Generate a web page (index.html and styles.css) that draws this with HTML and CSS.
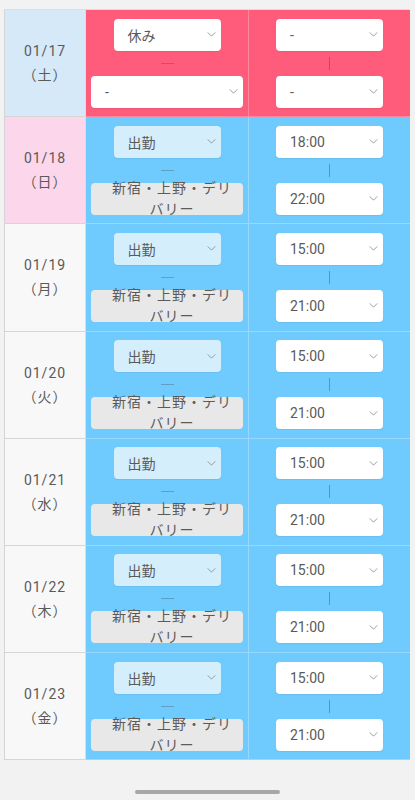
FILE: index.html
```html
<!DOCTYPE html>
<html lang="ja">
<head>
<meta charset="utf-8">
<title>シフト</title>
<link rel="stylesheet" href="styles.css">
</head>
<body>
<div class="sheet">
  <div class="date date-sat"><span>01/17</span><span>（土）</span></div>
  <div class="cell off">
    <div class="sel sel-short"><span>休み</span><svg class="chev" viewBox="0 0 10 6"><path d="M0.5 0.5 L5 5 L9.5 0.5"/></svg></div>
    <div class="dash"></div>
    <div class="sel sel-wide"><span>-</span><svg class="chev" viewBox="0 0 10 6"><path d="M0.5 0.5 L5 5 L9.5 0.5"/></svg></div>
  </div>
  <div class="cell off last">
    <div class="sel sel-short"><span>-</span><svg class="chev" viewBox="0 0 10 6"><path d="M0.5 0.5 L5 5 L9.5 0.5"/></svg></div>
    <div class="vbar"></div>
    <div class="sel sel-short"><span>-</span><svg class="chev" viewBox="0 0 10 6"><path d="M0.5 0.5 L5 5 L9.5 0.5"/></svg></div>
  </div>

  <div class="date date-sun"><span>01/18</span><span>（日）</span></div>
  <div class="cell on">
    <div class="sel sel-short sel-blue"><span>出勤</span><svg class="chev" viewBox="0 0 10 6"><path d="M0.5 0.5 L5 5 L9.5 0.5"/></svg></div>
    <div class="dash"></div>
    <div class="place">新宿・上野・デリバリー</div>
  </div>
  <div class="cell on last">
    <div class="sel sel-short"><span>18:00</span><svg class="chev" viewBox="0 0 10 6"><path d="M0.5 0.5 L5 5 L9.5 0.5"/></svg></div>
    <div class="vbar"></div>
    <div class="sel sel-short"><span>22:00</span><svg class="chev" viewBox="0 0 10 6"><path d="M0.5 0.5 L5 5 L9.5 0.5"/></svg></div>
  </div>

  <div class="date"><span>01/19</span><span>（月）</span></div>
  <div class="cell on">
    <div class="sel sel-short sel-blue"><span>出勤</span><svg class="chev" viewBox="0 0 10 6"><path d="M0.5 0.5 L5 5 L9.5 0.5"/></svg></div>
    <div class="dash"></div>
    <div class="place">新宿・上野・デリバリー</div>
  </div>
  <div class="cell on last">
    <div class="sel sel-short"><span>15:00</span><svg class="chev" viewBox="0 0 10 6"><path d="M0.5 0.5 L5 5 L9.5 0.5"/></svg></div>
    <div class="vbar"></div>
    <div class="sel sel-short"><span>21:00</span><svg class="chev" viewBox="0 0 10 6"><path d="M0.5 0.5 L5 5 L9.5 0.5"/></svg></div>
  </div>

  <div class="date"><span>01/20</span><span>（火）</span></div>
  <div class="cell on">
    <div class="sel sel-short sel-blue"><span>出勤</span><svg class="chev" viewBox="0 0 10 6"><path d="M0.5 0.5 L5 5 L9.5 0.5"/></svg></div>
    <div class="dash"></div>
    <div class="place">新宿・上野・デリバリー</div>
  </div>
  <div class="cell on last">
    <div class="sel sel-short"><span>15:00</span><svg class="chev" viewBox="0 0 10 6"><path d="M0.5 0.5 L5 5 L9.5 0.5"/></svg></div>
    <div class="vbar"></div>
    <div class="sel sel-short"><span>21:00</span><svg class="chev" viewBox="0 0 10 6"><path d="M0.5 0.5 L5 5 L9.5 0.5"/></svg></div>
  </div>

  <div class="date"><span>01/21</span><span>（水）</span></div>
  <div class="cell on">
    <div class="sel sel-short sel-blue"><span>出勤</span><svg class="chev" viewBox="0 0 10 6"><path d="M0.5 0.5 L5 5 L9.5 0.5"/></svg></div>
    <div class="dash"></div>
    <div class="place">新宿・上野・デリバリー</div>
  </div>
  <div class="cell on last">
    <div class="sel sel-short"><span>15:00</span><svg class="chev" viewBox="0 0 10 6"><path d="M0.5 0.5 L5 5 L9.5 0.5"/></svg></div>
    <div class="vbar"></div>
    <div class="sel sel-short"><span>21:00</span><svg class="chev" viewBox="0 0 10 6"><path d="M0.5 0.5 L5 5 L9.5 0.5"/></svg></div>
  </div>

  <div class="date"><span>01/22</span><span>（木）</span></div>
  <div class="cell on">
    <div class="sel sel-short sel-blue"><span>出勤</span><svg class="chev" viewBox="0 0 10 6"><path d="M0.5 0.5 L5 5 L9.5 0.5"/></svg></div>
    <div class="dash"></div>
    <div class="place">新宿・上野・デリバリー</div>
  </div>
  <div class="cell on last">
    <div class="sel sel-short"><span>15:00</span><svg class="chev" viewBox="0 0 10 6"><path d="M0.5 0.5 L5 5 L9.5 0.5"/></svg></div>
    <div class="vbar"></div>
    <div class="sel sel-short"><span>21:00</span><svg class="chev" viewBox="0 0 10 6"><path d="M0.5 0.5 L5 5 L9.5 0.5"/></svg></div>
  </div>

  <div class="date"><span>01/23</span><span>（金）</span></div>
  <div class="cell on">
    <div class="sel sel-short sel-blue"><span>出勤</span><svg class="chev" viewBox="0 0 10 6"><path d="M0.5 0.5 L5 5 L9.5 0.5"/></svg></div>
    <div class="dash"></div>
    <div class="place">新宿・上野・デリバリー</div>
  </div>
  <div class="cell on last">
    <div class="sel sel-short"><span>15:00</span><svg class="chev" viewBox="0 0 10 6"><path d="M0.5 0.5 L5 5 L9.5 0.5"/></svg></div>
    <div class="vbar"></div>
    <div class="sel sel-short"><span>21:00</span><svg class="chev" viewBox="0 0 10 6"><path d="M0.5 0.5 L5 5 L9.5 0.5"/></svg></div>
  </div>
</div>
<div class="home-bar"></div>
</body>
</html>
```

FILE: styles.css
```css
html, body {
  margin: 0;
  padding: 0;
}
body {
  background: #f2f2f2;
  font-family: Roboto, "Noto Sans CJK JP", sans-serif;
  color: #5a5a5a;
  width: 415px;
  height: 800px;
  position: relative;
  overflow: hidden;
}
.sheet {
  margin: 9px 0 0 4px;
  width: 405px;
  display: grid;
  grid-template-columns: 81px 163px 161px;
  grid-auto-rows: 107.2px;
  border-top: 1px solid #dcdcdc;
  border-left: 1px solid #d4d4d4;
  box-sizing: content-box;
}
.date {
  background: #f8f8f8;
  border-right: 1px solid #dcdcdc;
  border-bottom: 1px solid #d6d6d6;
  display: flex;
  flex-direction: column;
  align-items: center;
  justify-content: center;
  font-size: 14px;
  letter-spacing: 1px;
  line-height: 24px;
  color: #5a5a5a;
}
.date-sat { background: #d6e9f8; }
.date-sun { background: #fcd6ea; }
.cell {
  display: flex;
  flex-direction: column;
  align-items: center;
  padding-top: 8.5px;
  box-sizing: border-box;
  border-right: 1px solid rgba(255,255,255,0.28);
  border-bottom: 1px solid rgba(255,255,255,0.28);
}
.cell.last { border-right: none; }
.off { background: #ff5b7a; }
.on { background: #6fcafd; }
.sel {
  height: 32px;
  box-sizing: border-box;
  background: #fff;
  border-radius: 4px;
  display: flex;
  align-items: center;
  justify-content: space-between;
  padding: 0 5px 0 14px;
  font-size: 14px;
  color: #5a5a5a;
  box-shadow: 0 1px 1px rgba(0,0,0,0.06);
  flex-shrink: 0;
}
.sel-short { width: 107px; }
.sel-wide { width: 152px; }
.sel-blue { background: #d5eefc; }
.chev {
  width: 9px;
  height: 5px;
  overflow: visible;
}
.chev path {
  fill: none;
  stroke: #888;
  stroke-width: 1;
}
.dash {
  width: 13px;
  height: 1px;
  background: rgba(60,60,60,0.3);
  margin: 12px 0;
}
.vbar {
  width: 1px;
  height: 13px;
  background: rgba(60,60,60,0.38);
  margin: 6px 0;
}
.place {
  width: 152px;
  height: 32px;
  box-sizing: border-box;
  background: #e8e8e8;
  border-radius: 4px;
  display: flex;
  align-items: center;
  justify-content: center;
  text-align: center;
  padding: 0 8px 0 18px;
  font-size: 14px;
  letter-spacing: 1px;
  line-height: 21px;
  color: #5a5a5a;
  flex-shrink: 0;
}
.home-bar {
  position: absolute;
  left: 135px;
  top: 790px;
  width: 145px;
  height: 4px;
  border-radius: 2px;
  background: #a8a8a8;
}
```
